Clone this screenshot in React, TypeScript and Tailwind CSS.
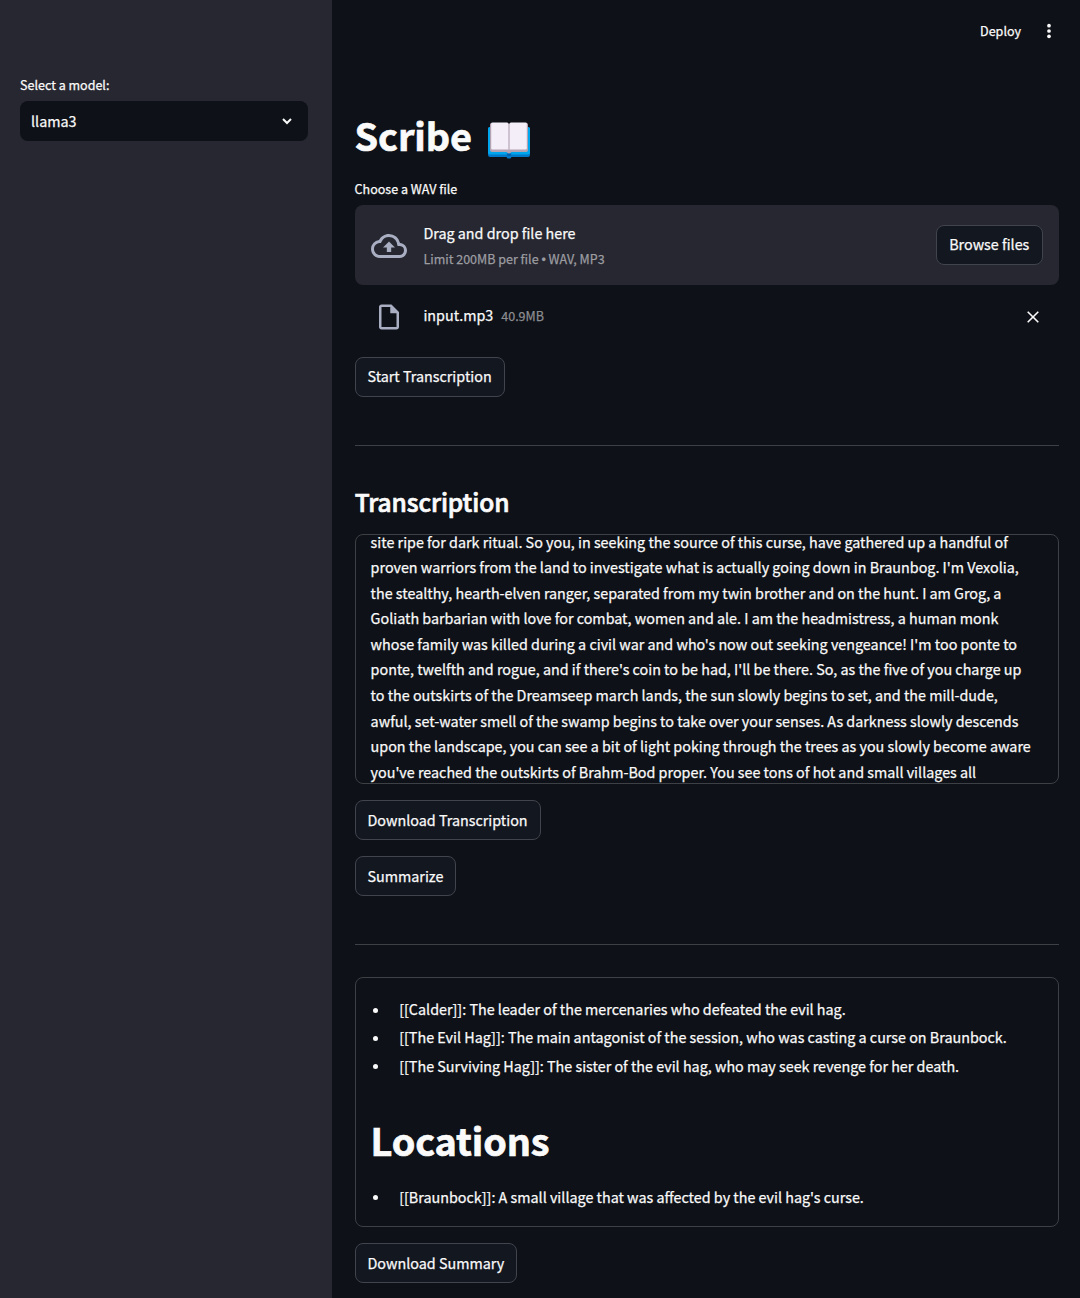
import type { ReactNode } from "react";

const transcript = [
  "site ripe for dark ritual. So you, in seeking the source of this curse, have gathered up a handful of",
  "proven warriors from the land to investigate what is actually going down in Braunbog. I'm Vexolia,",
  "the stealthy, hearth-elven ranger, separated from my twin brother and on the hunt. I am Grog, a",
  "Goliath barbarian with love for combat, women and ale. I am the headmistress, a human monk",
  "whose family was killed during a civil war and who's now out seeking vengeance! I'm too ponte to",
  "ponte, twelfth and rogue, and if there's coin to be had, I'll be there. So, as the five of you charge up",
  "to the outskirts of the Dreamseep march lands, the sun slowly begins to set, and the mill-dude,",
  "awful, set-water smell of the swamp begins to take over your senses. As darkness slowly descends",
  "upon the landscape, you can see a bit of light poking through the trees as you slowly become aware",
  "you've reached the outskirts of Brahm-Bod proper. You see tons of hot and small villages all",
];

const characters = [
  "[[Calder]]: The leader of the mercenaries who defeated the evil hag.",
  "[[The Evil Hag]]: The main antagonist of the session, who was casting a curse on Braunbock.",
  "[[The Surviving Hag]]: The sister of the evil hag, who may seek revenge for her death.",
];

const locations = ["[[Braunbock]]: A small village that was affected by the evil hag's curse."];

function Button({ children, className = "" }: { children: ReactNode; className?: string }) {
  return (
    <button
      className={`flex h-10 items-center self-start rounded-lg border border-[#41444c] bg-[#131720] pr-[12px] pl-[11.5px] leading-6 whitespace-nowrap ${className}`}
    >
      {children}
    </button>
  );
}

function Divider() {
  return <hr className="border-0 border-b border-[#3d4045]" />;
}

function BulletList({ items }: { items: string[] }) {
  return (
    <ul className="flex flex-col gap-[4.4px]">
      {items.map((item) => (
        <li key={item} className="flex h-6 items-center gap-[21.2px] pl-[2px]">
          <span className="mt-[2px] size-[5px] shrink-0 rounded-full bg-[#fafafa]" />
          <span className="leading-6 whitespace-nowrap">{item}</span>
        </li>
      ))}
    </ul>
  );
}

function BookIcon() {
  return (
    <svg className="mt-[6px] ml-[16px] h-[37px] w-[44px]" viewBox="0 0 44 37">
      <path d="M3 5h38a2 2 0 0 1 2 2v26a2 2 0 0 1-2 2H24.500l-1 1.500h-3l-1-1.500H3a2 2 0 0 1-2-2V7a2 2 0 0 1 2-2z" fill="#0078c8" />
      <path d="M3 5h38a2 2 0 0 1 2 2v23.500a2 2 0 0 1-2 2H3a2 2 0 0 1-2-2V7a2 2 0 0 1 2-2z" fill="#00a6ed" />
      <path d="M4.500 1h15q2 0 2.500 1.400q.5-1.400 2.500-1.400h15q1.500 0 1.500 1.500V28q0 2-2 2H24.500L22 32l-2.500-2h-14.500q-2 0-2-2V2.500Q3 1 4.500 1z" fill="#b4a3b2" />
      <path d="M5.500.5h14.500q1.600 0 1.600 1.800v25.200H5.500q-1.300 0-1.300-1.300V1.800q0-1.300 1.300-1.300z" fill="#f3eef8" />
      <path d="M38.500.5H24q-1.600 0-1.600 1.800v25.200h16.100q1.300 0 1.300-1.300V1.800q0-1.300-1.300-1.300z" fill="#f3eef8" />
      <path d="M22 2v26" stroke="#c3b6c6" strokeWidth="1" />
      <path d="M19.500 31.500h5l-1 2.500h-3z" fill="#0060b0" />
    </svg>
  );
}

export default function App() {
  return (
    <div className='flex h-[1298px] w-[1080px] overflow-hidden bg-[#0e1117] font-["Noto_Sans_CJK_SC",sans-serif] text-[14.33px] text-[#fafafa] [-webkit-text-stroke:0.25px]'>
      <aside className="flex w-[332px] shrink-0 flex-col bg-[#262730] pt-[74px] pr-6 pl-5">
        <label className="text-[12.53px] leading-[21px]">Select a model:</label>
        <div className="mt-[6px] flex h-10 items-center justify-between rounded-lg bg-[#0e1117] pr-4 pl-[11px]">
          <span className="leading-6">llama3</span>
          <svg className="h-[7px] w-[10px]" viewBox="0 0 10 7">
            <path d="M1 1l4 4 4-4" fill="none" stroke="#fafafa" strokeWidth="2" />
          </svg>
        </div>
      </aside>

      <main className="flex min-w-0 flex-1 flex-col pr-[21px] pl-[23px]">
        <header className="flex h-[62px] shrink-0 items-center justify-end pr-[7px]">
          <span className="pb-[2px] text-[12.53px] leading-[21px]">Deploy</span>
          <svg className="ml-[25px] h-4 w-[6px]" viewBox="0 0 6 16" fill="#fafafa">
            <circle cx="3" cy="2.700" r="1.850" />
            <circle cx="3" cy="8" r="1.850" />
            <circle cx="3" cy="13.300" r="1.850" />
          </svg>
        </header>

        <div className="mt-[49px] flex h-[53px] shrink-0 items-center">
          <h1 className="-ml-[0.4px] w-[116.500px] pb-[6px] text-[37.8px] leading-[53px] font-bold tracking-[-0.1px] [-webkit-text-stroke:0.7px]">
            Scribe
          </h1>
          <BookIcon />
        </div>

        <label className="mt-[14px] -ml-[0.4px] text-[12.53px] leading-[21px]">Choose a WAV file</label>
        <section className="mt-[6px] flex h-20 shrink-0 items-center rounded-lg bg-[#262730] px-4">
          <svg className="mt-px size-9 shrink-0" viewBox="0 0 24 24" fill="#a9aec2">
            <path d="M19.350 10.040A7.490 7.490 0 0 0 12 4C9.110 4 6.600 5.640 5.350 8.040A5.994 5.994 0 0 0 0 14c0 3.310 2.690 6 6 6h13c2.760 0 5-2.240 5-5 0-2.640-2.050-4.780-4.650-4.960zM19 18H6c-2.210 0-4-1.790-4-4 0-2.050 1.530-3.760 3.560-3.970l1.070-.11.5-.95A5.469 5.469 0 0 1 12 6c2.620 0 4.880 1.860 5.390 4.430l.3 1.500 1.530.11A2.980 2.980 0 0 1 22 15c0 1.650-1.350 3-3 3zM8 13h2.550v3h2.900v-3H16l-4-4-4 4z" />
          </svg>
          <div className="ml-[16.4px] flex flex-1 flex-col pb-[2px]">
            <span className="leading-[26px]">Drag and drop file here</span>
            <span className="mt-[2px] text-[12.53px] leading-[21px] text-[#9c9ca1]">
              Limit 200MB per file <span className='font-["Liberation_Sans",sans-serif] leading-none'>•</span> WAV, MP3
            </span>
          </div>
          <div className="flex">
            <Button className="w-[107px] justify-center pb-[2px]">Browse files</Button>
          </div>
        </section>

        <div className="mt-4 flex h-8 shrink-0 items-center pr-[19px] pl-[19px]">
          <svg className="mb-px size-[30px] shrink-0" viewBox="0 0 24 24" fill="#a9aec2">
            <path d="M14 2H6c-1.100 0-1.990.9-1.990 2L4 20c0 1.100.89 2 1.990 2H18c1.100 0 2-.9 2-2V8l-6-6zM6 20V4h7v5h5v11H6z" />
          </svg>
          <span className="ml-[19.4px] pb-[4px] leading-6">input.mp3</span>
          <span className="ml-2 flex-1 pb-[2px] text-[12.53px] leading-6 text-[#8b8c90]">40.9MB</span>
          <svg className="size-[14px]" viewBox="0 0 14 14">
            <path d="M1.700 1.700l10.600 10.600M12.300 1.700L1.700 12.300" stroke="#fafafa" strokeWidth="1.600" />
          </svg>
        </div>

        <div className="mt-6 flex flex-col">
          <Button className="pb-[2px]">Start Transcription</Button>
        </div>

        <div className="mt-12">
          <Divider />
        </div>

        <h3 className="mt-[39px] -ml-[0.3px] text-[24.500px] leading-[34px] font-medium tracking-[-0.1px] [-webkit-text-stroke:0.7px]">
          Transcription
        </h3>
        <div className="mt-[15px] flex h-[250px] shrink-0 flex-col overflow-hidden rounded-lg border border-[#3d4045] pl-[14.6px]">
          <div className="-mt-[6.500px] flex flex-col">
            {transcript.map((line) => (
              <span key={line} className="h-[25.6px] leading-[25.6px] whitespace-nowrap">
                {line}
              </span>
            ))}
          </div>
        </div>

        <div className="mt-4 flex flex-col gap-4">
          <Button>Download Transcription</Button>
          <Button className="w-[101px]">Summarize</Button>
        </div>

        <div className="mt-12">
          <Divider />
        </div>

        <section className="mt-8 flex h-[250px] shrink-0 flex-col rounded-lg border border-[#3d4045] pt-[19px] pl-[15px]">
          <BulletList items={characters} />
          <h1 className="mt-[35px] mb-[19.2px] -ml-[0.4px] text-[37.8px] leading-[53px] font-bold tracking-[-0.15px] [-webkit-text-stroke:0.7px]">
            Locations
          </h1>
          <BulletList items={locations} />
        </section>

        <div className="mt-4 flex flex-col">
          <Button>Download Summary</Button>
        </div>
      </main>
    </div>
  );
}
